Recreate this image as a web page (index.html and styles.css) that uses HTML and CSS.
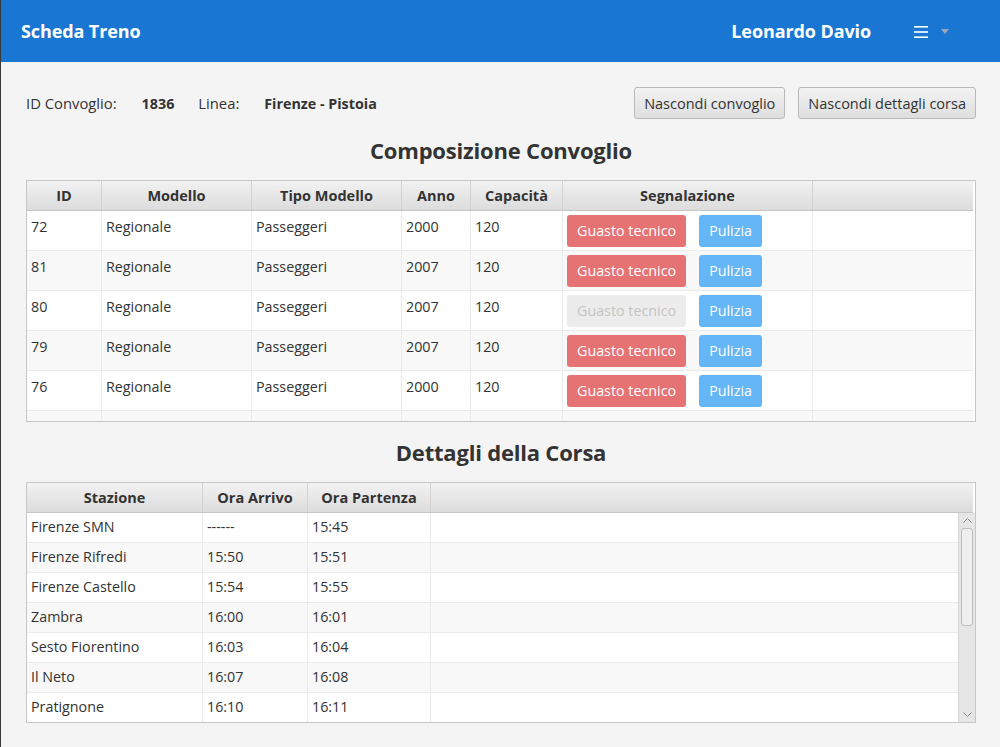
FILE: index.html
```html
<!DOCTYPE html>
<html lang="it">
<head>
<meta charset="utf-8">
<title>Scheda Treno</title>
<link rel="stylesheet" href="styles.css">
</head>
<body>
<div class="window">
  <header class="topbar">
    <div class="app-title">Scheda Treno</div>
    <div class="user">
      <span class="user-name">Leonardo Davio</span>
      <span class="menu-icon">
        <svg width="14" height="14" viewBox="0 0 14 14"><rect x="0" y="1" width="14" height="1.6" fill="#fff"/><rect x="0" y="6.2" width="14" height="1.6" fill="#fff"/><rect x="0" y="11.4" width="14" height="1.6" fill="#fff"/></svg>
      </span>
      <span class="caret">
        <svg width="8" height="5" viewBox="0 0 8 5"><path d="M0 0 H8 L4 5 Z" fill="#9aa7b8"/></svg>
      </span>
    </div>
  </header>

  <main class="content">
    <div class="info-row">
      <div class="info">
        <span class="label">ID Convoglio:</span>
        <span class="value">1836</span>
        <span class="label">Linea:</span>
        <span class="value">Firenze - Pistoia</span>
      </div>
      <div class="actions">
        <button class="btn">Nascondi convoglio</button>
        <button class="btn">Nascondi dettagli corsa</button>
      </div>
    </div>

    <h2 class="section-title">Composizione Convoglio</h2>

    <div class="table t1">
      <div class="thead row1">
        <div class="th">ID</div>
        <div class="th">Modello</div>
        <div class="th">Tipo Modello</div>
        <div class="th">Anno</div>
        <div class="th">Capacità</div>
        <div class="th">Segnalazione</div>
        <div class="th"></div>
      </div>
      <div class="tbody t1-body">
        <div class="tr row1">
          <div class="td">72</div><div class="td">Regionale</div><div class="td">Passeggeri</div><div class="td">2000</div><div class="td">120</div>
          <div class="td cell-btns"><span class="chip red">Guasto tecnico</span><span class="chip blue">Pulizia</span></div><div class="td"></div>
        </div>
        <div class="tr row1 alt">
          <div class="td">81</div><div class="td">Regionale</div><div class="td">Passeggeri</div><div class="td">2007</div><div class="td">120</div>
          <div class="td cell-btns"><span class="chip red">Guasto tecnico</span><span class="chip blue">Pulizia</span></div><div class="td"></div>
        </div>
        <div class="tr row1">
          <div class="td">80</div><div class="td">Regionale</div><div class="td">Passeggeri</div><div class="td">2007</div><div class="td">120</div>
          <div class="td cell-btns"><span class="chip disabled">Guasto tecnico</span><span class="chip blue">Pulizia</span></div><div class="td"></div>
        </div>
        <div class="tr row1 alt">
          <div class="td">79</div><div class="td">Regionale</div><div class="td">Passeggeri</div><div class="td">2007</div><div class="td">120</div>
          <div class="td cell-btns"><span class="chip red">Guasto tecnico</span><span class="chip blue">Pulizia</span></div><div class="td"></div>
        </div>
        <div class="tr row1">
          <div class="td">76</div><div class="td">Regionale</div><div class="td">Passeggeri</div><div class="td">2000</div><div class="td">120</div>
          <div class="td cell-btns"><span class="chip red">Guasto tecnico</span><span class="chip blue">Pulizia</span></div><div class="td"></div>
        </div>
        <div class="tr row1 alt">
          <div class="td"></div><div class="td"></div><div class="td"></div><div class="td"></div><div class="td"></div><div class="td"></div><div class="td"></div>
        </div>
      </div>
    </div>

    <h2 class="section-title second">Dettagli della Corsa</h2>

    <div class="table t2">
      <div class="thead row2">
        <div class="th">Stazione</div>
        <div class="th">Ora Arrivo</div>
        <div class="th">Ora Partenza</div>
        <div class="th"></div>
      </div>
      <div class="t2-wrap">
        <div class="tbody t2-body">
          <div class="tr row2"><div class="td">Firenze SMN</div><div class="td">------</div><div class="td">15:45</div><div class="td"></div></div>
          <div class="tr row2 alt"><div class="td">Firenze Rifredi</div><div class="td">15:50</div><div class="td">15:51</div><div class="td"></div></div>
          <div class="tr row2"><div class="td">Firenze Castello</div><div class="td">15:54</div><div class="td">15:55</div><div class="td"></div></div>
          <div class="tr row2 alt"><div class="td">Zambra</div><div class="td">16:00</div><div class="td">16:01</div><div class="td"></div></div>
          <div class="tr row2"><div class="td">Sesto Fiorentino</div><div class="td">16:03</div><div class="td">16:04</div><div class="td"></div></div>
          <div class="tr row2 alt"><div class="td">Il Neto</div><div class="td">16:07</div><div class="td">16:08</div><div class="td"></div></div>
          <div class="tr row2"><div class="td">Pratignone</div><div class="td">16:10</div><div class="td">16:11</div><div class="td"></div></div>
          <div class="tr row2 alt"><div class="td"></div><div class="td"></div><div class="td"></div><div class="td"></div></div>
        </div>
        <div class="scrollbar">
          <span class="arrow up">
            <svg width="9" height="6" viewBox="0 0 9 6"><path d="M0.5 5.5 L4.5 1.5 L8.5 5.5" fill="none" stroke="#8a8a8a" stroke-width="1"/></svg>
          </span>
          <span class="track"><span class="thumb"></span></span>
          <span class="arrow down">
            <svg width="9" height="6" viewBox="0 0 9 6"><path d="M0.5 0.5 L4.5 4.5 L8.5 0.5" fill="none" stroke="#8a8a8a" stroke-width="1"/></svg>
          </span>
        </div>
      </div>
    </div>
  </main>
</div>
</body>
</html>
```

FILE: styles.css
```css
* { box-sizing: border-box; }

html, body {
  margin: 0;
  padding: 0;
  background: #f4f4f4;
}

body {
  font-family: "Open Sans", "Noto Sans", "Liberation Sans", sans-serif;
  color: #333;
  font-size: 14.3px;
}

.window {
  width: 1000px;
  height: 747px;
  overflow: hidden;
  border-left: 1px solid #3a3a3a;
  background: #f4f4f4;
}

.topbar {
  height: 62px;
  background: #1976d2;
  margin-left: -1px;
  display: flex;
  align-items: center;
  justify-content: space-between;
  padding: 0 0 0 21px;
  color: #fff;
}

.app-title {
  font-size: 18px;
  font-weight: 700;
  letter-spacing: -0.1px;
}

.user {
  display: flex;
  align-items: center;
  padding-right: 51px;
}

.user-name {
  font-size: 18px;
  font-weight: 700;
  letter-spacing: -0.1px;
}

.menu-icon {
  display: flex;
  margin-left: 43px;
  margin-top: 1px;
}

.caret {
  display: flex;
  margin-left: 13px;
  margin-top: 1px;
}

.content {
  padding: 25px 24px 0 25px;
}

.info-row {
  display: flex;
  justify-content: space-between;
  align-items: center;
  height: 32px;
}

.info {
  display: flex;
  align-items: center;
  font-size: 14.8px;
}

.label { color: #333; }
.value { font-weight: 700; font-size: 14.3px; color: #333; margin-left: 25px; margin-right: 24px; }

.actions {
  display: flex;
  gap: 13px;
}

.btn {
  font-family: inherit;
  font-size: 14.5px;
  color: #333;
  height: 32px;
  padding: 0 9px;
  border: 1px solid #b9b9b9;
  border-radius: 3px;
  background: linear-gradient(#f3f3f3, #dedede);
  cursor: pointer;
}

.section-title {
  margin: 16px 0 15px;
  text-align: center;
  font-size: 22px;
  font-weight: 700;
  color: #333;
  line-height: 30px;
  letter-spacing: -0.2px;
}

.section-title.second {
  margin: 15px 0 15px;
}

.table {
  border: 1px solid #c6c6c6;
  background: #fff;
  padding-right: 2px;
}

.row1 {
  display: grid;
  grid-template-columns: 75px 150px 150px 69px 92px 250px 1fr;
}

.row2 {
  display: grid;
  grid-template-columns: 176px 105px 123px 1fr;
}

.thead {
  height: 30px;
  background: linear-gradient(#f2f2f2, #dcdcdc);
  border-bottom: 1px solid #c6c6c6;
}

.th {
  font-weight: 700;
  font-size: 14.5px;
  text-align: center;
  line-height: 29px;
  border-right: 1px solid #d2d2d2;
  white-space: nowrap;
}

.th:last-child { border-right: none; }

.tbody { background: #fff; }

.t1-body {
  height: 210px;
  overflow: hidden;
}

.tr { background: #fff; }
.tr.alt { background: #f8f8f8; }

.row1.tr { height: 40px; border-bottom: 1px solid #ebebeb; }
.row2.tr { height: 30px; border-bottom: 1px solid #ebebeb; }

.td {
  border-right: 1px solid #ebebeb;
  padding: 0 4px;
  white-space: nowrap;
  overflow: hidden;
}

.td:last-child { border-right: none; }

.row1 .td { padding-top: 6px; line-height: 19px; }
.row2 .td { line-height: 28px; }

.cell-btns {
  display: flex;
  align-items: flex-start;
  gap: 13px;
  padding-top: 4px !important;
  padding-left: 4px !important;
}

.chip {
  display: inline-block;
  height: 32px;
  line-height: 32px;
  padding: 0 10px;
  border-radius: 3px;
  font-size: 14.3px;
  color: #fff;
}

.chip.red { background: #e57373; }
.chip.blue { background: #64b6f7; }
.chip.disabled { background: #ececec; color: #c4c4c4; }

.t2-wrap {
  display: flex;
  height: 209px;
  margin-right: -2px;
}

.t2-body {
  flex: 1;
  overflow: hidden;
}

.scrollbar {
  width: 17px;
  background: #e6e6e6;
  border-left: 1px solid #d4d4d4;
  display: flex;
  flex-direction: column;
  align-items: center;
}

.arrow {
  height: 14px;
  display: flex;
  align-items: center;
  justify-content: center;
}

.track {
  flex: 1;
  width: 100%;
  display: flex;
  justify-content: center;
}

.thumb {
  width: 12px;
  height: 98px;
  margin-top: 1px;
  background: #efefef;
  border: 1px solid #bdbdbd;
  border-radius: 3px;
}
```
